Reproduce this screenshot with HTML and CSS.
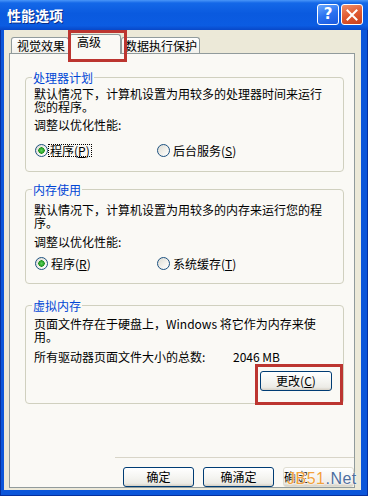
FILE: index.html
```html
<!DOCTYPE html>
<html lang="zh">
<head>
<meta charset="utf-8">
<title>性能选项</title>
<link rel="stylesheet" href="styles.css">
</head>
<body>
<div class="window">
  <div class="titlebar">
    <span class="title">性能选项</span>
    <div class="tb-buttons">
      <span class="tb-btn help">?</span>
      <span class="tb-btn close">
        <svg width="12" height="12" viewBox="0 0 12 12"><path d="M1.5 1.5 L10.5 10.5 M10.5 1.5 L1.5 10.5" stroke="#fff" stroke-width="2" stroke-linecap="square"/></svg>
      </span>
    </div>
  </div>
  <div class="client">
    <div class="tabs">
      <div class="tab tab-visual">视觉效果</div>
      <div class="tab tab-adv selected">高级</div>
      <div class="tab tab-dep">数据执行保护</div>
    </div>
    <div class="panel">
      <fieldset class="group g1">
        <legend>处理器计划</legend>
        <p class="desc">默认情况下，计算机设置为用较多的处理器时间来运行<br>您的程序。</p>
        <p class="label">调整以优化性能:</p>
        <div class="radios">
          <div class="radio"><span class="dot checked"></span><span class="rtext focus">程序(<u>P</u>)</span></div>
          <div class="radio"><span class="dot"></span><span class="rtext">后台服务(<u>S</u>)</span></div>
        </div>
      </fieldset>
      <fieldset class="group g2">
        <legend>内存使用</legend>
        <p class="desc">默认情况下，计算机设置为用较多的内存来运行您的程<br>序。</p>
        <p class="label">调整以优化性能:</p>
        <div class="radios">
          <div class="radio"><span class="dot checked"></span><span class="rtext plain">程序(<u>R</u>)</span></div>
          <div class="radio"><span class="dot"></span><span class="rtext">系统缓存(<u>T</u>)</span></div>
        </div>
      </fieldset>
      <fieldset class="group g3">
        <legend>虚拟内存</legend>
        <p class="desc">页面文件存在于硬盘上，Windows 将它作为内存来使<br>用。</p>
        <div class="total"><span>所有驱动器页面文件大小的总数:</span><span>2046 MB</span></div>
        <div class="change-row"><button class="btn change">更改(<u>C</u>)</button></div>
      </fieldset>
      <div class="actions">
        <button class="btn">确定</button>
        <button class="btn">确涌定</button>
        <button class="btn third">确定</button>
      </div>
    </div>
  </div>
  <span class="watermark"><span class="wm-a">JB51</span><span class="wm-b">.Net</span></span>
</div>
</body>
</html>
```
FILE: styles.css
```css
* { box-sizing: border-box; }
body {
  margin: 0;
  font-family: "Noto Sans CJK SC", "Noto Sans", sans-serif;
  font-size: 12px;
  color: #000;
}
.window {
  position: relative;
  width: 368px;
  height: 496px;
  background: #0C56DA;
  box-shadow: inset 1px 0 #06309E, inset -1px 0 #06309E, inset 0 -1px #06309E;
  display: flex;
  flex-direction: column;
  overflow: hidden;
}
.titlebar {
  height: 30px;
  flex: none;
  display: flex;
  justify-content: space-between;
  align-items: flex-start;
  padding: 4px 5px 0 7px;
  background: linear-gradient(180deg, #4A96F8 0%, #1468E8 10%, #0A5ADF 45%, #0B5CE2 85%, #0848C8 100%);
}
.title {
  color: #fff;
  font-weight: bold;
  font-size: 14px;
  line-height: 18px;
  margin-top: 2px;
  text-shadow: 1px 1px 0 #0A2E8A;
}
.tb-buttons {
  display: flex;
  gap: 2px;
}
.tb-btn {
  width: 22px;
  height: 21px;
  border: 1px solid #fff;
  border-radius: 3px;
  display: flex;
  align-items: center;
  justify-content: center;
}
.help {
  background: linear-gradient(160deg, #6AA8FF 0%, #2A72F0 50%, #1A5AE0 100%);
  color: #fff;
  font: bold 15px "DejaVu Sans", sans-serif;
  line-height: 1;
}
.close {
  background: linear-gradient(160deg, #F0906A 0%, #E05A32 50%, #C8401C 100%);
}
.client {
  flex: 1;
  margin: 0 7px 6px 4px;
  background: #ECE9D8;
  padding: 4px 6px 2px 5px;
  display: flex;
  flex-direction: column;
}
.tabs {
  display: flex;
  align-items: flex-end;
  height: 20px;
  margin: 0 0 -1px 2px;
}
.tab {
  height: 17px;
  border: 1px solid #919B9C;
  border-bottom: none;
  border-radius: 3px 3px 0 0;
  background: linear-gradient(#FFFFFF, #F1F0EA);
  line-height: 15px;
  white-space: nowrap;
}
.tab-visual { width: 58px; padding-left: 5px; }
.tab-adv { width: 52px; padding-left: 7px; }
.tab-dep { width: 79px; padding-left: 3px; }
.tab.selected {
  height: 20px;
  line-height: 13px;
  background: #FAF9F5;
  position: relative;
  z-index: 1;
}
.tab.selected::after {
  content: "";
  position: absolute;
  left: -2px;
  top: -5px;
  width: 53px;
  height: 26px;
  border: 3px solid #BC3530;
}
.panel {
  flex: 1;
  border: 1px solid #919B9C;
  background: #FAF9F5;
  padding: 17px 10px 0 15px;
  display: flex;
  flex-direction: column;
}
.group {
  margin: 0;
  min-width: 0;
  border: 1px solid #D0D0BF;
  border-radius: 4px;
  padding: 0 11px 14px 8px;
}
.group legend {
  color: #0046D5;
  font-size: 12px;
  line-height: 13px;
  padding: 0 1px;
  margin-left: -2px;
}
.desc, .label {
  margin: 0;
  line-height: 13px;
  white-space: nowrap;
}
.radios {
  display: grid;
  grid-template-columns: 122px auto;
  height: 13px;
  align-items: center;
}
.radio {
  display: flex;
  align-items: center;
  height: 13px;
  margin-left: 1px;
  line-height: 13px;
  white-space: nowrap;
}
.dot {
  flex: none;
  width: 13px;
  height: 13px;
  border-radius: 50%;
  border: 1px solid #1C5180;
  background: linear-gradient(135deg, #DCDBD3 0%, #F4F3EE 60%, #FFFFFF 100%);
}
.dot.checked {
  background:
    radial-gradient(circle at 50% 50%, #5ED25E 0, #2FA82F 2.2px, #1E8F1E 3px, transparent 3.4px),
    linear-gradient(135deg, #DCDBD3 0%, #F4F3EE 60%, #FFFFFF 100%);
}
.rtext { margin-left: 3px; }
.rtext.focus {
  margin-left: 0;
  border: 1px dotted #000;
  padding: 0 1px;
  line-height: 11px;
  height: 13px;
}
.rtext.plain { margin-left: 3px; }
u { text-decoration: underline; }

.g1 .desc { margin-top: 3px; }
.g1 .label { margin-top: 5px; }
.g1 .radios { margin-top: 13px; }
.g1 { padding-bottom: 14px; }

.g2 { margin-top: 11px; padding-bottom: 13px; }
.g2 .desc { margin-top: 7px; }
.g2 .label { margin-top: 6px; }
.g2 .radios { margin-top: 9px; }

.g3 { margin-top: 15px; padding-bottom: 12px; }
.g3 .desc { margin-top: 5px; }
.total {
  margin-top: 7px;
  display: grid;
  grid-template-columns: 199px auto;
  line-height: 13px;
  white-space: nowrap;
}
.change-row {
  margin-top: 8px;
  display: flex;
  justify-content: flex-end;
}
.btn {
  width: 71px;
  height: 20px;
  padding: 0;
  border: 1px solid #003C74;
  border-radius: 3px;
  background: linear-gradient(180deg, #FFFFFF 0%, #F4F4F0 55%, #ECEBE6 85%, #D6D0C5 100%);
  font-family: "Noto Sans CJK SC", "Noto Sans", sans-serif;
  font-size: 12px;
  line-height: 16px;
  color: #000;
}
.btn.change {
  width: 72px;
  position: relative;
}
.btn.change::after {
  content: "";
  position: absolute;
  left: -6px;
  top: -8px;
  width: 82px;
  height: 35px;
  border: 3px solid #BC3530;
}
.actions {
  margin: auto -10px 0 90px;
  border-top: 1px solid #D8D5C8;
  padding: 9px 0 0 8px;
  display: flex;
  gap: 9px;
}
.btn.third {
  text-align: left;
  padding-left: 0;
  border-color: #E0DED2;
}
.watermark {
  position: absolute;
  left: 287px;
  top: 470px;
  font-family: "Liberation Sans", sans-serif;
  font-size: 16px;
  line-height: 18px;
  letter-spacing: 0.5px;
  text-shadow: 0 0 2px #fff, 0 0 2px #fff;
}
.wm-a { color: #F2A23C; }
.wm-b { color: #4E6E9E; }
```
